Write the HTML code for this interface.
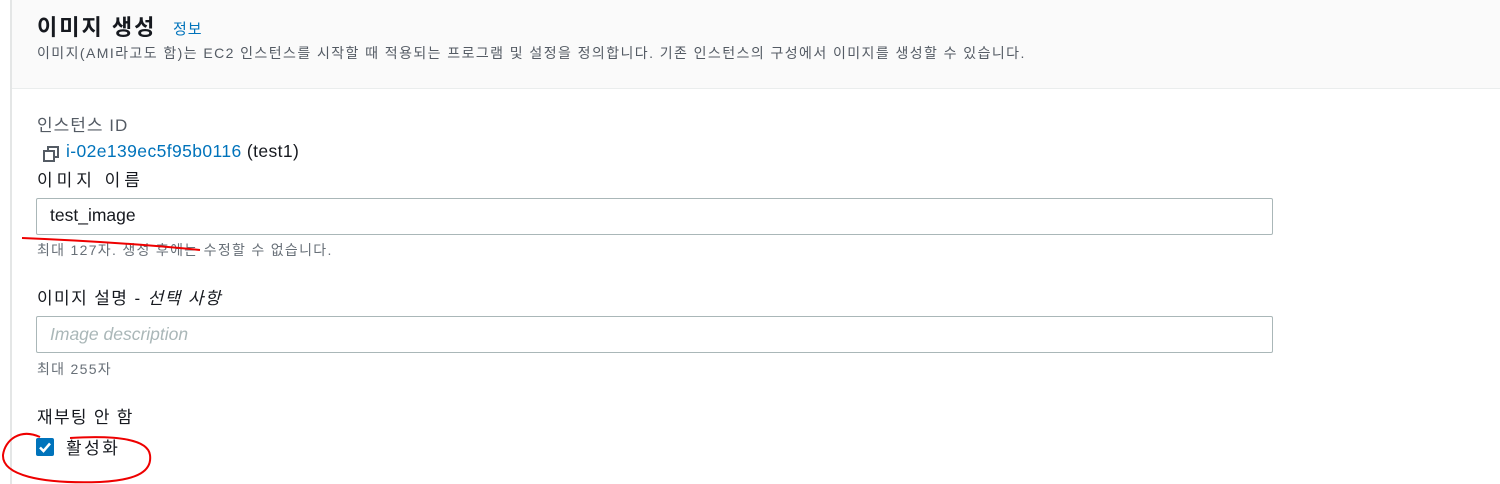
<!DOCTYPE html>
<html><head><meta charset="utf-8"><style>
*{margin:0;padding:0;box-sizing:border-box}
body{width:1500px;height:484px;background:#fff;position:relative;overflow:hidden;font-family:"Liberation Sans","Noto Sans CJK KR",sans-serif;color:#16191f}
.a{position:absolute;white-space:nowrap}
.hdr{position:absolute;left:11px;top:0;width:1489px;height:89px;background:#fafafa;border-bottom:1px solid #eaeded}
.lb{position:absolute;left:10px;top:0;width:2px;height:484px;background:#e4e6e6}
.inp{position:absolute;left:36px;width:1237px;height:37px;border:1px solid #aab7b8;border-radius:2px;background:#fff}
.hint{font-size:14px;color:#687078;letter-spacing:1.3px}
.lab{font-size:17px;color:#16191f;letter-spacing:2px}
</style></head><body>
<div class="hdr"></div>
<div class="lb"></div>
<div class="a" style="left:37px;top:10px;font-size:22px;font-weight:bold;letter-spacing:2px">이미지 생성</div>
<div class="a" style="left:173px;top:18px;font-size:15px;color:#0073bb;letter-spacing:1px">정보</div>
<div class="a" style="left:37px;top:43px;font-size:14px;color:#545b64;letter-spacing:1.42px">이미지(AMI라고도 함)는 EC2 인스턴스를 시작할 때 적용되는 프로그램 및 설정을 정의합니다. 기존 인스턴스의 구성에서 이미지를 생성할 수 있습니다.</div>
<div class="a" style="left:37px;top:111px;font-size:17px;color:#545b64;letter-spacing:1px">인스턴스 ID</div>
<svg class="a" style="left:42px;top:145px" width="18" height="18" viewBox="0 0 18 18"><rect x="2" y="6" width="10" height="10" fill="none" stroke="#545b64" stroke-width="2"/><path d="M6 6V2h10v10h-4" fill="none" stroke="#545b64" stroke-width="2"/></svg>
<div class="a" style="left:66px;top:141px;font-size:17.5px;letter-spacing:0.4px"><span style="color:#0073bb">i-02e139ec5f95b0116</span> (test1)</div>
<div class="a lab" style="left:37px;top:166px;letter-spacing:4px">이미지 이름</div>
<div class="inp" style="top:198px"></div>
<div class="a" style="left:50px;top:205px;font-size:17.5px">test_image</div>
<div class="a hint" style="left:37px;top:240px">최대 127자. 생성 후에는 수정할 수 없습니다.</div>
<div class="a lab" style="left:37px;top:284px;letter-spacing:1.4px">이미지 설명 - <i>선택 사항</i></div>
<div class="inp" style="top:316px"></div>
<div class="a" style="left:50px;top:324px;font-size:17.5px;font-style:italic;color:#aab7b8">Image description</div>
<div class="a hint" style="left:37px;top:359px">최대 255자</div>
<div class="a lab" style="left:37px;top:403px;letter-spacing:1.3px">재부팅 안 함</div>
<div class="a" style="left:36px;top:438px;width:18px;height:18px;background:#0073bb;border-radius:2px"></div>
<svg class="a" style="left:36px;top:438px" width="18" height="18"><path d="M4 9.5l3.5 3.5L14 5.5" fill="none" stroke="#fff" stroke-width="2.5"/></svg>
<div class="a" style="left:66px;top:434px;font-size:17px;letter-spacing:2.5px">활성화</div>
<svg class="a" style="left:0;top:0" width="1500" height="484"><path d="M22 238 Q120 242 200 250" fill="none" stroke="#e00" stroke-width="2"/><path d="M40 437 C20 428 5 440 3 455 C2 475 40 484 100 482 C140 480 152 470 150 455 C148 440 120 435 70 438" fill="none" stroke="#e00" stroke-width="2"/></svg>
</body></html>
